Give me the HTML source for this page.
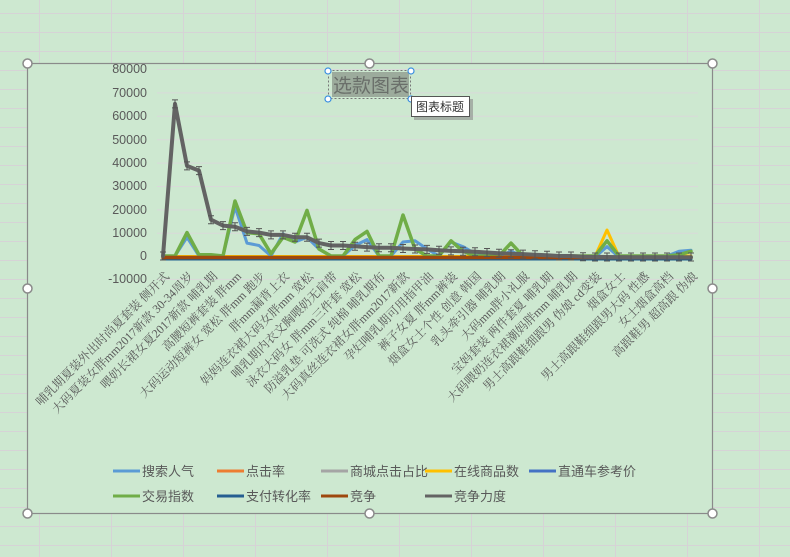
<!DOCTYPE html>
<html><head><meta charset="utf-8"><style>
body{margin:0;width:790px;height:557px;overflow:hidden;background:#cde8d0;}
svg{display:block}
.ax{font-family:"Liberation Sans",sans-serif;font-size:12.5px;fill:#595959}
.cl{font-family:"Liberation Serif","Noto Serif CJK SC",serif;font-size:12px;fill:#595959}
.lg{font-family:"Liberation Sans","Noto Sans CJK SC",sans-serif;font-size:13px;fill:#595959}
</style></head><body>
<svg width="790" height="557" viewBox="0 0 790 557">
<defs>
<g id="eb"><path d="M0 -4V4M-3 -4H3M-3 4H3" stroke="#555" stroke-width="1" fill="none"/></g>
</defs>
<g stroke="#d6d3d6" stroke-width="1">
<path d="M39.5 0V557M111.5 0V557M183.5 0V557M255.5 0V557M327.5 0V557M399.5 0V557M471.5 0V557M543.5 0V557M615.5 0V557M687.5 0V557M759.5 0V557"/>
<path d="M0 13.5H790M0 32.5H790M0 51.5H790M0 70.5H790M0 89.5H790M0 108.5H790M0 127.5H790M0 146.5H790M0 165.5H790M0 184.5H790M0 203.5H790M0 222.5H790M0 241.5H790M0 260.5H790M0 279.5H790M0 298.5H790M0 317.5H790M0 336.5H790M0 355.5H790M0 374.5H790M0 393.5H790M0 412.5H790M0 431.5H790M0 450.5H790M0 469.5H790M0 488.5H790M0 507.5H790M0 526.5H790M0 545.5H790"/>
</g>
<rect x="27.5" y="63.5" width="685" height="450" fill="#cde8d0" stroke="#8a8a8a" stroke-width="1.2"/>
<g stroke="#d9d9d9" stroke-width="1">
<path d="M157 69.5H698M157 92.9H698M157 116.3H698M157 139.7H698M157 163.1H698M157 186.5H698M157 209.9H698M157 233.3H698M157 279.4H698"/>
</g>
<g class="ax" text-anchor="end">
<text x="147" y="73">80000</text><text x="147" y="97">70000</text><text x="147" y="120">60000</text><text x="147" y="144">50000</text><text x="147" y="167">40000</text><text x="147" y="190">30000</text><text x="147" y="214">20000</text><text x="147" y="237">10000</text><text x="147" y="260">0</text><text x="147" y="283">-10000</text>
</g>
<g fill="none" stroke-linejoin="round" stroke-linecap="round">
<polyline stroke="#1f5f8f" stroke-width="3" points="163,259 691,259"/>
<polyline stroke="#ffc000" stroke-width="3" points="163,256.5 595,256.5 607,230 619,256.5 691,256"/>
<polyline stroke="#5b9bd5" stroke-width="3" points="163,256 175,256 187,237.3 199,256 211,256 223,256 235,206.9 247,243.1 259,245.5 271,256 283,233.8 295,242 307,237.3 319,249 331,256 343,256 355,245.5 367,239.6 379,256 391,256 403,242 415,240.8 427,249 439,256 451,242 463,246.6 475,253.7 487,256 499,256 511,251.3 523,256 535,256 547,256 559,257.2 571,257.2 583,257.2 595,257.2 607,246.6 619,257.2 631,257.2 643,257.2 655,257.2 667,256 679,251.3 691,250.2"/>
<polyline stroke="#70ad47" stroke-width="3.5" points="163,256 175,256 187,232.6 199,254.8 211,254.8 223,256 235,201 247,232.6 259,233.8 271,253.7 283,237.3 295,242 307,210.4 319,249 331,256 343,256 355,239.6 367,231.4 379,256 391,256 403,215 415,249 427,256 439,256 451,240.8 463,251.3 475,256 487,256 499,256 511,243.1 523,256 535,256 547,256 559,256 571,256 583,256 595,256 607,240.8 619,256 631,256 643,256 655,256 667,256 679,254.8 691,251.3"/>
<polyline stroke="#9e480e" stroke-width="3.5" points="163,257.5 691,257.5"/>
<polyline stroke="#636363" stroke-width="4" points="163,256 175,103.9 187,165.9 199,170.6 211,219.7 223,225.6 235,226.8 247,231.4 259,232.6 271,234.9 283,234.9 295,237.3 307,237.3 319,243.1 331,245.5 343,245.5 355,246.2 367,247.1 379,247.8 391,247.8 403,248.5 415,249 427,249.4 439,250.2 451,250.9 463,251.3 475,251.8 487,252.5 499,253.2 511,253.7 523,254.1 535,254.8 547,255.3 559,256 571,256 583,256.7 595,256.9 607,257 619,257.1 631,257.2 643,257.2 655,257.2 667,257.2 679,257.2 691,257.2"/>
</g>
<g>
<use href="#eb" x="163" y="256"/><use href="#eb" x="175" y="103.9"/><use href="#eb" x="187" y="165.9"/><use href="#eb" x="199" y="170.6"/><use href="#eb" x="211" y="219.7"/><use href="#eb" x="223" y="225.6"/><use href="#eb" x="235" y="226.8"/><use href="#eb" x="247" y="231.4"/><use href="#eb" x="259" y="232.6"/><use href="#eb" x="271" y="234.9"/><use href="#eb" x="283" y="234.9"/><use href="#eb" x="295" y="237.3"/><use href="#eb" x="307" y="237.3"/><use href="#eb" x="319" y="243.1"/><use href="#eb" x="331" y="245.5"/><use href="#eb" x="343" y="245.5"/><use href="#eb" x="355" y="246.2"/><use href="#eb" x="367" y="247.1"/><use href="#eb" x="379" y="247.8"/><use href="#eb" x="391" y="247.8"/><use href="#eb" x="403" y="248.5"/><use href="#eb" x="415" y="249"/><use href="#eb" x="427" y="249.4"/><use href="#eb" x="439" y="250.2"/><use href="#eb" x="451" y="250.9"/><use href="#eb" x="463" y="251.3"/><use href="#eb" x="475" y="251.8"/><use href="#eb" x="487" y="252.5"/><use href="#eb" x="499" y="253.2"/><use href="#eb" x="511" y="253.7"/><use href="#eb" x="523" y="254.1"/><use href="#eb" x="535" y="254.8"/><use href="#eb" x="547" y="255.3"/><use href="#eb" x="559" y="256"/><use href="#eb" x="571" y="256"/><use href="#eb" x="583" y="256.7"/><use href="#eb" x="595" y="257"/><use href="#eb" x="607" y="257"/><use href="#eb" x="619" y="257"/><use href="#eb" x="631" y="257"/><use href="#eb" x="643" y="257"/><use href="#eb" x="655" y="257"/><use href="#eb" x="667" y="257"/><use href="#eb" x="679" y="257"/><use href="#eb" x="691" y="257"/>
</g>
<g class="cl" text-anchor="end">
<text transform="translate(170,277) rotate(-45)">哺乳期夏装外出时尚夏套装 侧开式</text>
<text transform="translate(194,277) rotate(-45)">大码夏装女胖mm2017新款 30-34周岁</text>
<text transform="translate(218,277) rotate(-45)">喂奶长裙女夏2017新款 哺乳期</text>
<text transform="translate(242,277) rotate(-45)">高腰短裤套装 胖mm</text>
<text transform="translate(266,277) rotate(-45)">大码运动短裤女 宽松 胖mm 跑步</text>
<text transform="translate(290,277) rotate(-45)">胖mm漏背上衣</text>
<text transform="translate(314,277) rotate(-45)">妈妈连衣裙大码女胖mm 宽松</text>
<text transform="translate(338,277) rotate(-45)">哺乳期内衣文胸喂奶无肩带</text>
<text transform="translate(362,277) rotate(-45)">泳衣大码女 胖mm三件套 宽松</text>
<text transform="translate(386,277) rotate(-45)">防溢乳垫 可洗式 纯棉 哺乳期布</text>
<text transform="translate(410,277) rotate(-45)">大码真丝连衣裙女胖mm2017新款</text>
<text transform="translate(434,277) rotate(-45)">孕妇哺乳期可用指甲油</text>
<text transform="translate(458,277) rotate(-45)">裤子女夏 胖mm裤装</text>
<text transform="translate(482,277) rotate(-45)">烟盒女士个性 创意 韩国</text>
<text transform="translate(506,277) rotate(-45)">乳头牵引器 哺乳期</text>
<text transform="translate(530,277) rotate(-45)">大码mm胖小礼服</text>
<text transform="translate(554,277) rotate(-45)">宝妈套装 两件套夏 哺乳期</text>
<text transform="translate(578,277) rotate(-45)">大码喂奶连衣裙潮妈胖mm 哺乳期</text>
<text transform="translate(602,277) rotate(-45)">男士高跟鞋细跟男 伪娘 cd变装</text>
<text transform="translate(626,277) rotate(-45)">烟盒女士</text>
<text transform="translate(650,277) rotate(-45)">男士高跟鞋细跟男大码 性感</text>
<text transform="translate(674,277) rotate(-45)">女士烟盒高档</text>
<text transform="translate(698,277) rotate(-45)">高跟鞋男 超高跟 伪娘</text>
</g>
<rect x="332" y="72" width="77" height="25" fill="#9cab9c"/>
<rect x="328.5" y="70.5" width="82" height="28" fill="none" stroke="#777" stroke-dasharray="2,2"/>
<text x="333" y="92" font-family="'Liberation Sans','Noto Sans CJK SC',sans-serif" font-size="19" fill="#6a6f6a">选款图表</text>
<g fill="#fff" stroke="#3b8fe0" stroke-width="1.2"><circle cx="328" cy="71" r="3"/><circle cx="411" cy="71" r="3"/><circle cx="328" cy="99" r="3"/><circle cx="411" cy="99" r="3"/></g>
<rect x="414" y="99" width="59" height="21" fill="#8a8a8a" opacity="0.6"/>
<rect x="411.5" y="96.5" width="58" height="20" fill="#fff" stroke="#555"/>
<text x="416" y="111" font-family="'Liberation Sans','Noto Sans CJK SC',sans-serif" font-size="12" fill="#333">图表标题</text>
<g stroke-width="3">
<path d="M113 471H140" stroke="#5b9bd5"/><path d="M217 471H244" stroke="#ed7d31"/><path d="M321 471H348" stroke="#a5a5a5"/><path d="M425 471H452" stroke="#ffc000"/><path d="M529 471H556" stroke="#4472c4"/>
<path d="M113 496H140" stroke="#70ad47"/><path d="M217 496H244" stroke="#255e91"/><path d="M321 496H348" stroke="#9e480e"/><path d="M425 496H452" stroke="#636363"/>
</g>
<g class="lg">
<text x="142" y="476">搜索人气</text><text x="246" y="476">点击率</text><text x="350" y="476">商城点击占比</text><text x="454" y="476">在线商品数</text><text x="558" y="476">直通车参考价</text>
<text x="142" y="501">交易指数</text><text x="246" y="501">支付转化率</text><text x="350" y="501">竞争</text><text x="454" y="501">竞争力度</text>
</g>
<g fill="#fff" stroke="#8a8a8a" stroke-width="1.5">
<circle cx="27.5" cy="63.5" r="4.5"/><circle cx="369.5" cy="63.5" r="4.5"/><circle cx="712.5" cy="63.5" r="4.5"/>
<circle cx="27.5" cy="288.5" r="4.5"/><circle cx="712.5" cy="288.5" r="4.5"/>
<circle cx="27.5" cy="513.5" r="4.5"/><circle cx="369.5" cy="513.5" r="4.5"/><circle cx="712.5" cy="513.5" r="4.5"/>
</g>
</svg>
</body></html>
